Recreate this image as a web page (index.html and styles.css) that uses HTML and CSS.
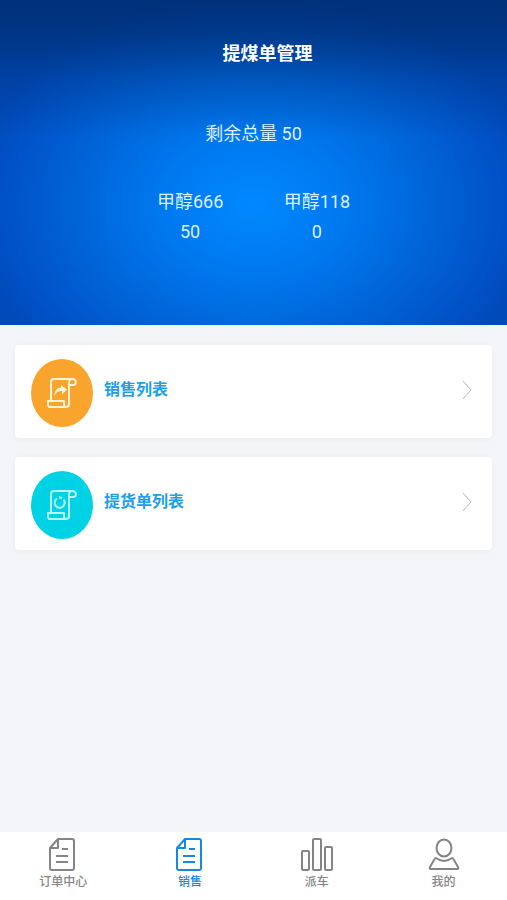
FILE: index.html
```html
<!DOCTYPE html>
<html lang="zh-CN">
<head>
<meta charset="utf-8">
<meta name="viewport" content="width=device-width, initial-scale=1">
<title>提煤单管理</title>
<link rel="stylesheet" href="styles.css">
</head>
<body>
<header class="hero">
  <h1 class="hero-title">提煤单管理</h1>
  <p class="total">剩余总量 50</p>
  <dl class="stats">
    <div class="stat"><dt>甲醇666</dt><dd>50</dd></div>
    <div class="stat"><dt>甲醇118</dt><dd>0</dd></div>
  </dl>
</header>
<main class="list">
  <a class="card" href="#sales">
    <span class="badge badge-orange">
      <svg class="scroll" viewBox="0 0 32 32" aria-hidden="true">
        <path d="M5 23V5q0-3 3-3h18q-3 0-3 4v21q0 3-3 3"/>
        <path d="M26 2c5 0 5 6 1 6h-4M20 30H4q-2 0-2-3v-3h16v3q0 3 2 3"/>
        <path class="solid" d="M8.500 19c0-6 3-8 6.500-8.500V8l6 4.500-5 5V14c-3 0-6 1-7.500 5z"/>
      </svg>
    </span>
    <span class="card-label">销售列表</span>
    <svg class="chevron" viewBox="0 0 10 20" aria-hidden="true"><path d="M1 1l8 9-8 9"/></svg>
  </a>
  <a class="card" href="#pickup">
    <span class="badge badge-cyan">
      <svg class="scroll" viewBox="0 0 32 32" aria-hidden="true">
        <path d="M5 23V5q0-3 3-3h18q-3 0-3 4v21q0 3-3 3"/>
        <path d="M26 2c5 0 5 6 1 6h-4M20 30H4q-2 0-2-3v-3h16v3q0 3 2 3"/>
        <path d="M11 9.500a5 5 0 1 0 6.500 1M13 8.500a5 5 0 0 1 3 .5"/>
      </svg>
    </span>
    <span class="card-label">提货单列表</span>
    <svg class="chevron" viewBox="0 0 10 20" aria-hidden="true"><path d="M1 1l8 9-8 9"/></svg>
  </a>
</main>
<nav class="tabs">
  <a class="tab" href="#orders">
    <svg class="tab-icon" viewBox="0 0 32 34" aria-hidden="true"><path d="M11 2h14q2 0 2 2v27q0 2-2 2H5q-2 0-2-2V11zM11 2v9H3M15 12h6M9 19h12M9 25h12"/></svg>
    <span>订单中心</span>
  </a>
  <a class="tab tab-active" href="#sale" aria-current="page">
    <svg class="tab-icon" viewBox="0 0 32 34" aria-hidden="true"><path d="M11 2h14q2 0 2 2v27q0 2-2 2H5q-2 0-2-2V11zM11 2v9H3M15 12h6M9 19h12M9 25h12"/></svg>
    <span>销售</span>
  </a>
  <a class="tab" href="#dispatch">
    <svg class="tab-icon" viewBox="0 0 32 34" aria-hidden="true"><rect x="1" y="14" width="7" height="19" rx="1"/><rect x="12" y="2" width="8" height="31" rx="1"/><rect x="24" y="10" width="7" height="23" rx="1"/></svg>
    <span>派车</span>
  </a>
  <a class="tab" href="#me">
    <svg class="tab-icon" viewBox="0 0 32 34" aria-hidden="true"><ellipse cx="16" cy="11" rx="7.500" ry="8.500"/><path d="M8 21q-1 0-2 2l-4 7q-1 2 1 2h26q2 0 1-2l-4-7q-1-2-2-2-8 6-16 0z"/></svg>
    <span>我的</span>
  </a>
</nav>
</body>
</html>
```

FILE: styles.css
```css
* {
  box-sizing: border-box;
}

body {
  margin: 0;
  min-height: 100vh;
  display: flex;
  flex-direction: column;
  background: #f3f5f9;
  font-family: Roboto, "Noto Sans CJK SC", sans-serif;
}

a {
  color: inherit;
  text-decoration: none;
}

svg {
  fill: none;
  stroke: currentColor;
  stroke-width: 2;
  stroke-linejoin: round;
}

.hero {
  padding: 39px 0 78px;
  color: #d9f0ff;
  font-size: 18px;
  line-height: 30px;
  text-align: center;
  background:
    linear-gradient(rgba(0, 42, 105, 0.8), rgba(0, 42, 105, 0.65) 10%, rgba(0, 42, 105, 0.25) 25%, rgba(0, 42, 105, 0) 42%),
    radial-gradient(ellipse 56% 66% at 50% 63%, #0088ff, #0078ee 33%, #0064d8 62%, #0050c4 90%, #004aba);
}

.hero-title {
  margin: 0;
  padding-left: 28px;
  color: #fff;
  font-size: 18px;
  font-weight: 700;
}

.total {
  margin: 50px 0 38px;
}

.stats {
  display: flex;
  justify-content: center;
  margin: 0;
}

.stat {
  width: 25%;
}

.stat dd {
  margin: 0;
}

.list {
  flex: 1;
  display: flex;
  flex-direction: column;
  gap: 19px;
  padding: 20px 15px;
}

.card {
  display: flex;
  gap: 11px;
  padding: 14px 20px 11px 16px;
  border-radius: 4px;
  background: #fff;
  box-shadow: 0 1px 6px rgba(40, 60, 100, 0.04);
}

.badge {
  display: grid;
  place-items: center;
  width: 62px;
  height: 68px;
  border-radius: 50%;
}

.badge-orange {
  background: #f9a42c;
  color: #fff3d8;
}

.badge-cyan {
  background: #00d2e6;
  color: #b8fbff;
}

.scroll {
  width: 32px;
  height: 32px;
}

.solid {
  fill: currentColor;
  stroke: none;
}

.card-label {
  flex: 1;
  color: #209fe6;
  font-size: 16px;
  font-weight: 700;
  line-height: 62px;
}

.chevron {
  width: 10px;
  height: 62px;
  color: #b8b8b8;
  stroke-width: 1;
}

.tabs {
  display: flex;
  padding: 5px 0 9px;
  background: #fff;
}

.tab {
  flex: 1;
  display: flex;
  flex-direction: column;
  align-items: center;
  gap: 2px;
  color: #858585;
  font-size: 12px;
  font-weight: 500;
  line-height: 18px;
}

.tab-active {
  color: #1688e0;
}

.tab-icon {
  width: 32px;
  height: 34px;
}
```
